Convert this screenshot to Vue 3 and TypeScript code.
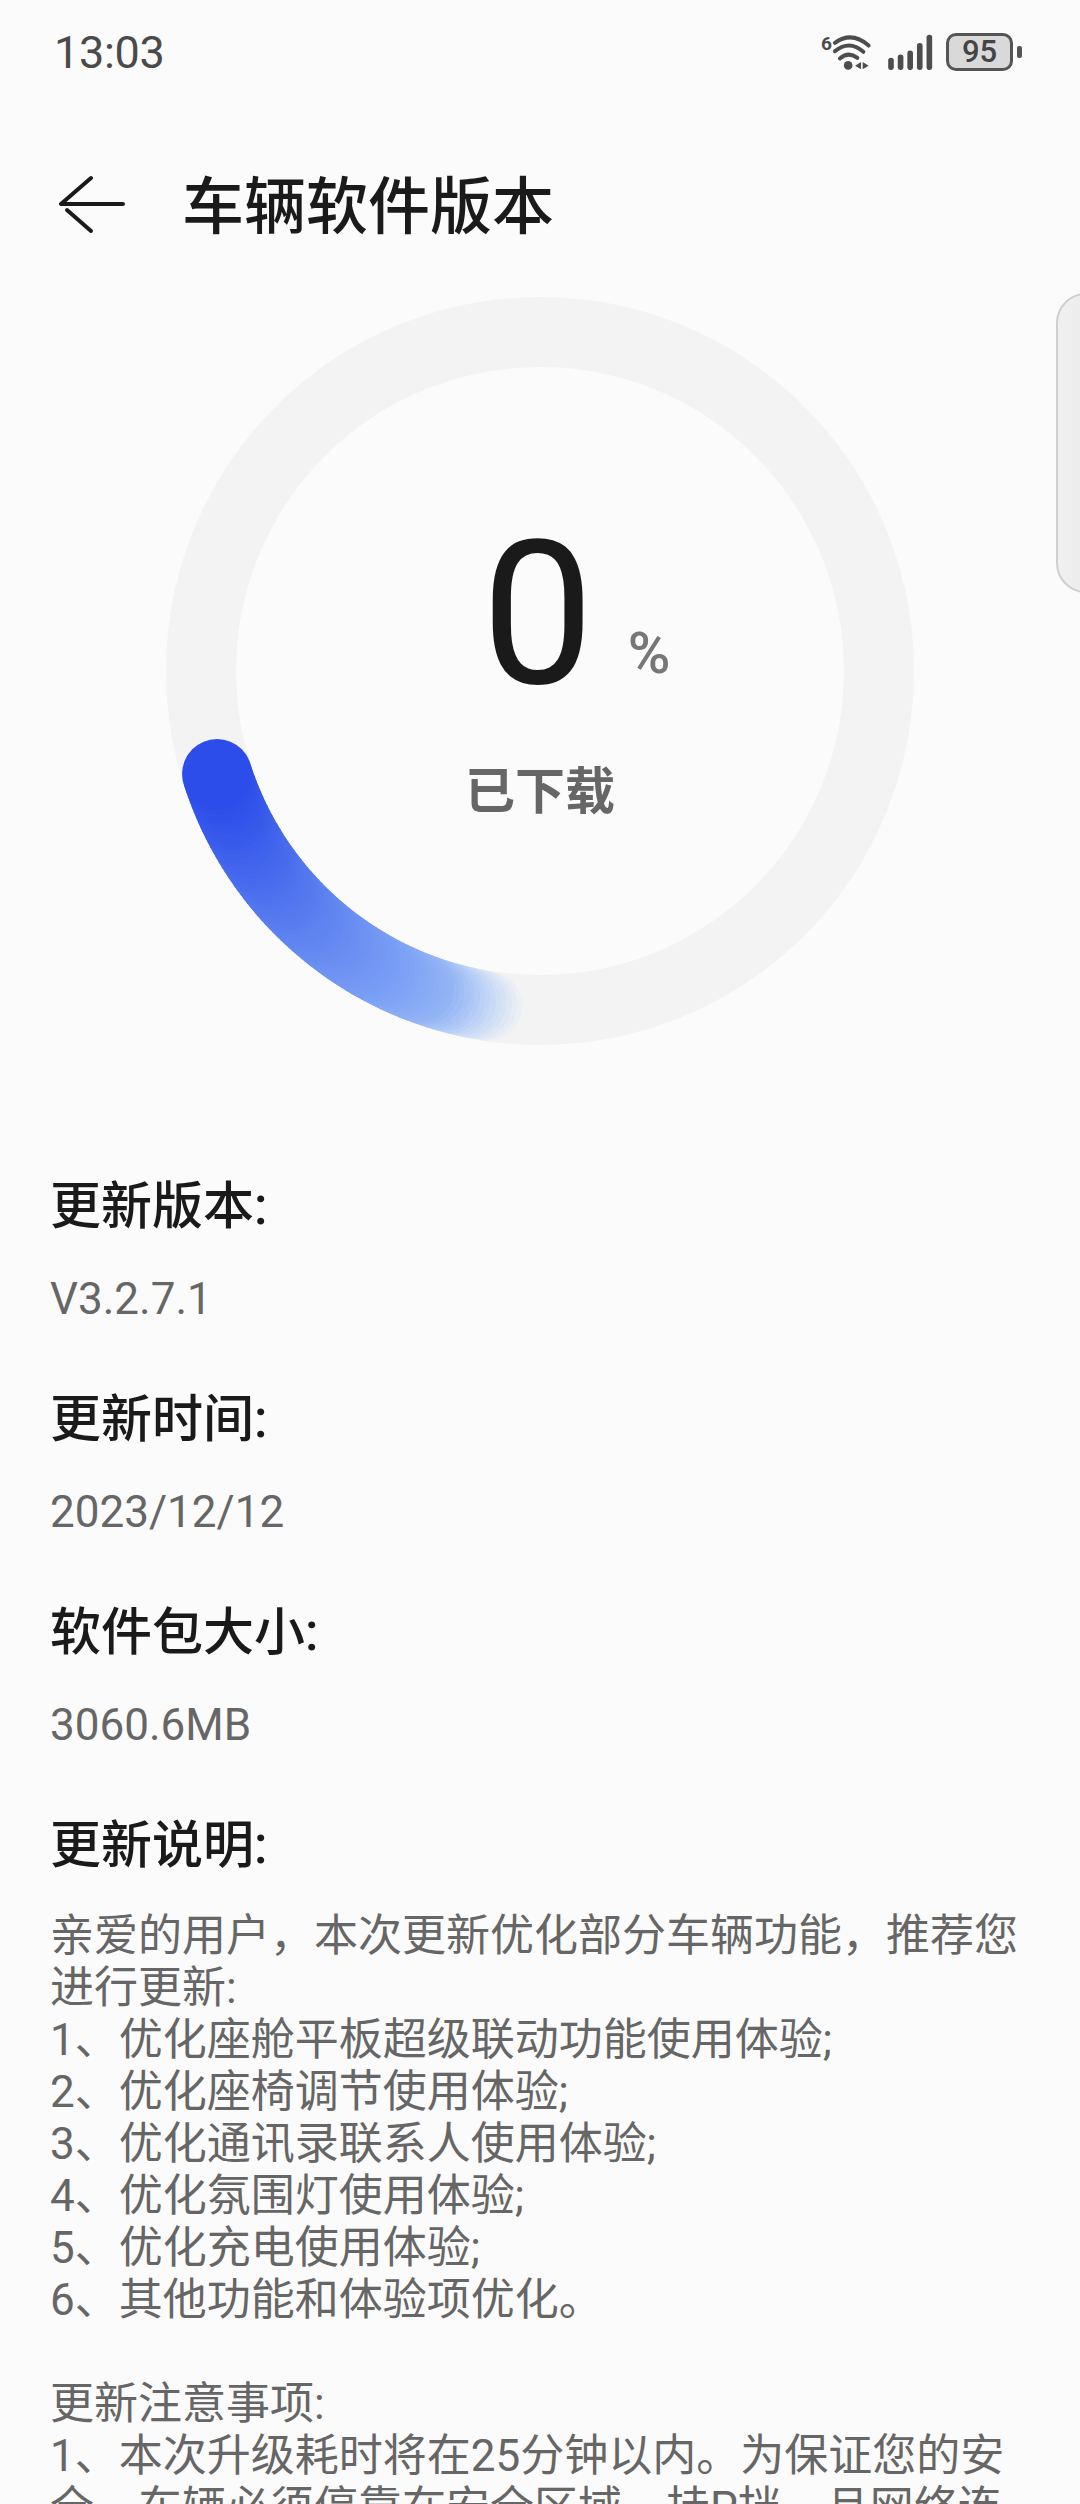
<script setup lang="ts">
import { computed } from "vue";

const rows = [
  { label: "更新版本:", value: "V3.2.7.1" },
  { label: "更新时间:", value: "2023/12/12" },
  { label: "软件包大小:", value: "3060.6MB" },
];

const notes = [
  "亲爱的用户，本次更新优化部分车辆功能，推荐您",
  "进行更新:",
  "1、优化座舱平板超级联动功能使用体验;",
  "2、优化座椅调节使用体验;",
  "3、优化通讯录联系人使用体验;",
  "4、优化氛围灯使用体验;",
  "5、优化充电使用体验;",
  "6、其他功能和体验项优化。",
  "",
  "更新注意事项:",
  "1、本次升级耗时将在25分钟以内。为保证您的安",
  "全，车辆必须停靠在安全区域，挂P挡，且网络连",
];

// stacked circles along the ring, drawn from the faded tail up to the head
const stops = [
  { t: 0, c: [44, 77, 234] },
  { t: 0.386, c: [92, 128, 239] },
  { t: 0.66, c: [123, 160, 245] },
  { t: 0.8, c: [147, 180, 245] },
  { t: 0.87, c: [178, 203, 246] },
  { t: 0.93, c: [208, 223, 246] },
  { t: 1, c: [243, 243, 243] },
];

const dots = computed(() => {
  const list = [];
  const count = 70;
  const headAngle = 162.3;
  const tailAngle = 98;
  for (let i = 0; i <= count; i++) {
    const t = 1 - i / count;
    const angle = ((tailAngle + (headAngle - tailAngle) * (i / count)) * Math.PI) / 180;
    let k = 0;
    while (k < stops.length - 2 && stops[k + 1].t < t) k++;
    const a = stops[k];
    const b = stops[k + 1];
    const f = (t - a.t) / (b.t - a.t);
    const rgb = a.c.map((v, n) => Math.round(v + (b.c[n] - v) * f));
    list.push({
      id: i,
      x: 374 + 339 * Math.cos(angle),
      y: 374 + 339 * Math.sin(angle),
      fill: `rgb(${rgb.join(",")})`,
    });
  }
  return list;
});
</script>

<template>
  <div class="page">
    <div class="status-bar">
      <span class="time">13:03</span>
      <div class="status-icons">
        <svg class="wifi" viewBox="120 95 155 115">
          <text x="122" y="145" class="wifi-six">6</text>
          <path d="M164 125 Q215 88 266 133" />
          <path d="M164 150 Q208 115 250 152" />
          <path d="M179 172 Q205 150 232 170" />
          <circle cx="204" cy="193" r="13" />
          <polygon points="243,183 243,205 225,194" />
          <polygon points="248,183 248,205 266,194" />
        </svg>
        <svg class="signal" viewBox="325 100 136 108">
          <line x1="334" y1="180" x2="334" y2="200" />
          <line x1="363" y1="170" x2="363" y2="200" />
          <line x1="392" y1="158" x2="392" y2="200" />
          <line x1="421" y1="135" x2="421" y2="200" />
          <line x1="450" y1="110" x2="450" y2="200" />
        </svg>
        <div class="battery">
          <div class="battery-body">95</div>
          <div class="battery-nub"></div>
        </div>
      </div>
    </div>

    <div class="header">
      <svg class="back" viewBox="0 0 66 60">
        <path d="M32 4 L2 30 L64 30" />
        <path d="M8 36 L32 57" />
      </svg>
      <span class="title">车辆软件版本</span>
    </div>

    <div class="ring-wrap">
      <svg class="ring" viewBox="0 0 748 748">
        <circle class="ring-track" cx="374" cy="374" r="339" />
        <circle
          v-for="d in dots"
          :key="d.id"
          :cx="d.x"
          :cy="d.y"
          r="35"
          :fill="d.fill"
        />
      </svg>
      <div class="ring-center">
        <div class="percent">
          <span class="num">0</span>
          <span class="unit">%</span>
        </div>
        <div class="caption">已下载</div>
      </div>
    </div>

    <div class="info">
      <div v-for="row in rows" :key="row.label" class="row">
        <div class="label">{{ row.label }}</div>
        <div class="value">{{ row.value }}</div>
      </div>
      <div class="label">更新说明:</div>
      <div class="notes">
        <div v-for="(line, i) in notes" :key="i" class="note-line">{{ line }}</div>
      </div>
    </div>

    <div class="side-tab"></div>
  </div>
</template>

<style>
html,
body {
  margin: 0;
  background: #fbfbfb;
}
</style>

<style scoped>
.page {
  position: relative;
  width: 1080px;
  height: 2504px;
  overflow: hidden;
  background: #fbfbfb;
  font-family: "Roboto", "Noto Sans CJK SC", sans-serif;
}

.status-bar {
  display: flex;
  align-items: center;
  justify-content: space-between;
  height: 104px;
  padding: 0 58px 0 54px;
}

.time {
  font-size: 45px;
  letter-spacing: -0.3px;
  color: #4a4a4a;
}

.status-icons {
  display: flex;
  align-items: center;
}

.wifi {
  width: 52px;
  height: 38px;
  margin-right: 16px;
  overflow: visible;
}

.wifi path {
  fill: none;
  stroke: #4d4d4d;
  stroke-width: 12;
  stroke-linecap: round;
}

.wifi circle,
.wifi polygon {
  fill: #4d4d4d;
}

.wifi-six {
  font-size: 58px;
  font-weight: 700;
  fill: #4d4d4d;
}

.signal {
  width: 45px;
  height: 36px;
  margin-right: 13px;
}

.signal line {
  stroke: #4d4d4d;
  stroke-width: 17;
  stroke-linecap: round;
}

.battery {
  display: flex;
  align-items: center;
}

.battery-body {
  width: 61px;
  height: 32px;
  border: 3px solid #555;
  border-radius: 10px;
  background: #d9d9d9;
  color: #444;
  font-size: 31px;
  font-weight: 500;
  line-height: 32px;
  text-align: center;
}

.battery-nub {
  width: 5px;
  height: 12px;
  margin-left: 4px;
  border-radius: 2px;
  background: #555;
}

.header {
  display: flex;
  align-items: center;
  height: 100px;
  padding-left: 59px;
  margin-top: 50px;
}

.back {
  width: 66px;
  height: 60px;
  margin-right: 57px;
}

.back path {
  fill: none;
  stroke: #1a1a1a;
  stroke-width: 4;
  stroke-linecap: round;
  stroke-linejoin: round;
}

.title {
  position: relative;
  top: -2px;
  font-size: 62px;
  font-weight: 500;
  color: #1a1a1a;
}

.ring-wrap {
  display: grid;
  justify-items: center;
  align-items: center;
  margin-top: 43px;
}

.ring,
.ring-center {
  grid-area: 1 / 1;
}

.ring {
  width: 748px;
  height: 748px;
}

.ring-track {
  fill: none;
  stroke: #f3f3f3;
  stroke-width: 70;
}

.ring-center {
  display: flex;
  flex-direction: column;
  align-items: center;
  margin-top: -20px;
}

.percent {
  display: flex;
  align-items: baseline;
  margin-left: 72px;
}

.num {
  font-size: 200px;
  line-height: 230px;
  color: #1a1a1a;
}

.unit {
  position: relative;
  top: -10px;
  margin-left: 34px;
  font-size: 58px;
  font-weight: 500;
  color: #777;
}

.caption {
  margin-top: 32px;
  font-size: 50px;
  font-weight: 700;
  line-height: 60px;
  color: #666;
}

.info {
  margin-top: 130px;
  padding: 0 50px;
}

.row {
  margin-bottom: 63px;
}

.label {
  font-size: 51px;
  font-weight: 500;
  line-height: 64px;
  color: #1a1a1a;
}

.value {
  margin-top: 34px;
  font-size: 44px;
  line-height: 52px;
  color: #666;
}

.notes {
  margin-top: 32px;
}

.note-line {
  min-height: 52px;
  font-size: 44px;
  line-height: 52px;
  white-space: nowrap;
  color: #666;
}

.side-tab {
  position: absolute;
  top: 293px;
  left: 1056px;
  width: 60px;
  height: 300px;
  box-sizing: border-box;
  border: 2px solid #cfcfcf;
  border-radius: 40px;
  background: linear-gradient(90deg, #f0f0f0, #e9e9ea);
}
</style>
